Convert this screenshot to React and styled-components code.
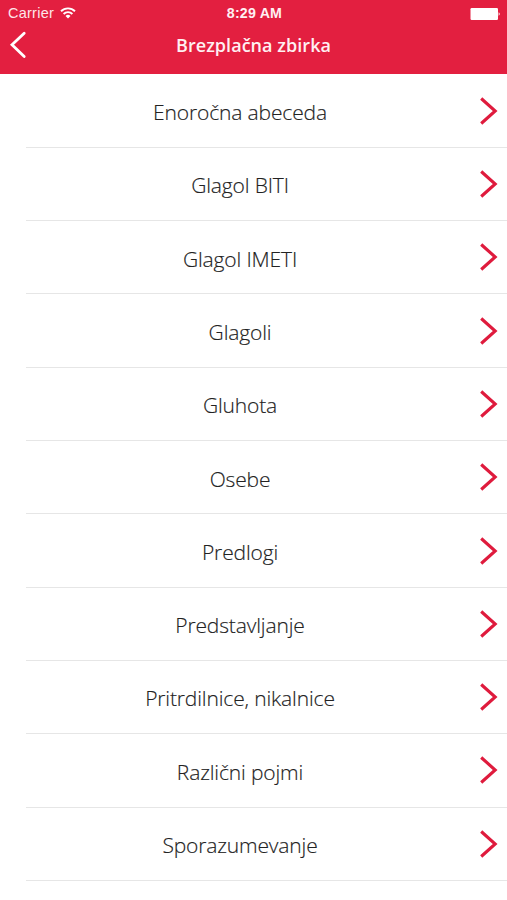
import React from 'react';
import styled, { createGlobalStyle } from 'styled-components';

const GlobalStyle = createGlobalStyle`
  * { box-sizing: border-box; }
  body { margin: 0; background: #fff; }
`;

const Screen = styled.main`
  width: 507px;
  height: 900px;
  overflow: hidden;
  background: #fff;
  font-family: "Open Sans", sans-serif;
`;

const Header = styled.header`
  height: 74px;
  background: #e31f40;
  color: #fff;
`;

const StatusBar = styled.div`
  display: grid;
  grid-template-columns: 1fr auto 1fr;
  align-items: center;
  height: 27px;
  padding: 0 6px 0 8px;
  font: 14.5px/27px "Liberation Sans", Arial, sans-serif;
`;

const Carrier = styled.div`
  display: flex;
  align-items: center;
  gap: 6px;
  color: #fde6e9;
  letter-spacing: 0.25px;
`;

const Clock = styled.strong`
  font-size: 14.2px;
  font-weight: 700;
  letter-spacing: 0.2px;
  color: #fff0f2;
`;

const BatterySlot = styled.div`
  display: flex;
  justify-content: flex-end;
`;

const WifiIcon = styled.svg`
  margin-bottom: 1px;
`;

const NavBar = styled.div`
  display: grid;
  grid-template-columns: 40px 1fr 40px;
  align-items: center;
  height: 36px;
`;

const BackButton = styled.button`
  display: flex;
  padding: 0 0 0 9px;
  border: 0;
  background: none;
`;

const Title = styled.h1`
  margin: 0;
  color: #fff0f2;
  font-size: 18px;
  font-weight: 600;
  line-height: 24px;
  letter-spacing: 0.05px;
  text-align: center;
`;

const List = styled.ul`
  margin: 0;
  padding: 0.6px 0 0 26px;
  list-style: none;
`;

const Row = styled.li`
  display: grid;
  grid-template-columns: 1fr 53px;
  align-items: center;
  height: 73.3px;
  border-bottom: 1px solid #e6e6e6;
`;

const Label = styled.span`
  padding: 2.6px 0 0;
  color: #222;
  font-size: 21px;
  font-weight: 300;
  letter-spacing: -0.14px;
  text-align: center;
  -webkit-text-stroke: 0.15px #222;
`;

const items = [
  'Enoročna abeceda', 'Glagol BITI', 'Glagol IMETI', 'Glagoli', 'Gluhota', 'Osebe',
  'Predlogi', 'Predstavljanje', 'Pritrdilnice, nikalnice', 'Različni pojmi', 'Sporazumevanje',
];

export default function App() {
  return (
    <Screen>
      <GlobalStyle />
      <Header>
        <StatusBar>
          <Carrier>
            Carrier
            <WifiIcon width="16" height="12" viewBox="0 0 16 12" fill="none" stroke="#fff" strokeWidth="1.9">
              <path d="M1 4.2a10 10 0 0 1 14 0M3.6 7a6.2 6.2 0 0 1 8.8 0" />
              <path d="M8 11.5 5.5 8.9a3.6 3.6 0 0 1 5 0Z" fill="#fff" stroke="none" />
            </WifiIcon>
          </Carrier>
          <Clock>8:29 AM</Clock>
          <BatterySlot>
            <svg width="31" height="12" viewBox="0 0 31 12" fill="#fff">
              <rect x=".5" width="27.5" height="12" rx="1.2" />
              <path d="M28.6 4.2a2 2 0 0 1 0 3.6Z" />
            </svg>
          </BatterySlot>
        </StatusBar>
        <NavBar>
          <BackButton aria-label="Nazaj">
            <svg width="18" height="28" viewBox="0 0 18 28" fill="none" stroke="#fff" strokeWidth="2.8" strokeLinecap="round">
              <path d="M15.2 2.2 3 13.8l12.2 11.8" />
            </svg>
          </BackButton>
          <Title>Brezplačna zbirka</Title>
        </NavBar>
      </Header>
      <List>
        {items.map((item) => (
          <Row key={item}>
            <Label>{item}</Label>
            <svg width="53" height="30" viewBox="0 0 53 30" fill="none" stroke="#df1b3d" strokeWidth="3.1">
              <path d="M27.2 2.5 41.2 15 27.2 27.5" />
            </svg>
          </Row>
        ))}
      </List>
    </Screen>
  );
}
